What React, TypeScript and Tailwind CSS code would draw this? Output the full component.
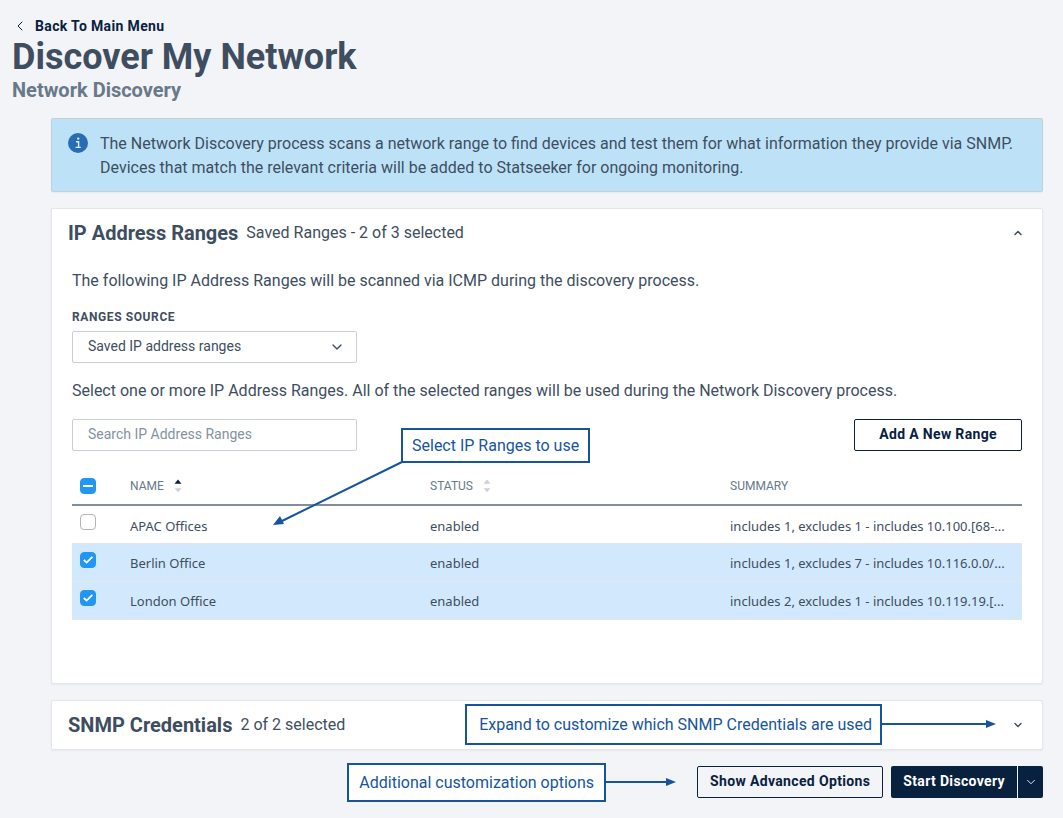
import { useState } from 'react'
import { ChevronDown, ChevronLeft, ChevronUp } from 'lucide-react'

interface Range { name: string; status: string; summary: string }

const ranges: Range[] = [
  { name: 'APAC Offices', status: 'enabled', summary: 'includes 1, excludes 1 - includes 10.100.[68-...' },
  { name: 'Berlin Office', status: 'enabled', summary: 'includes 1, excludes 7 - includes 10.116.0.0/...' },
  { name: 'London Office', status: 'enabled', summary: 'includes 2, excludes 1 - includes 10.119.19.[...' },
]

function Checkbox({ label, checked, mixed = false, onChange }: { label: string; checked: boolean; mixed?: boolean; onChange: () => void }) {
  return (
    <span className="relative block w-4 h-4">
      <input type="checkbox" aria-label={label} checked={checked} onChange={onChange}
        ref={el => { if (el) el.indeterminate = mixed }}
        className="block w-4 h-4 appearance-none rounded border border-[#b4b4b4] bg-white checked:border-[#2196f3] checked:bg-[#2196f3] indeterminate:border-[#2196f3] indeterminate:bg-[#2196f3]"
      />
      <svg viewBox="0 0 16 16" className="absolute inset-0 w-4 h-4 pointer-events-none" fill="none" stroke="white" strokeWidth="2">
        {mixed ? <path d="M3 8h10" /> : checked && <path d="M3.8 8 6.6 10.6 12.4 4.8" strokeWidth="1.8" />}
      </svg>
    </span>
  )
}

function SortIcon({ active = false }: { active?: boolean }) {
  return (
    <svg viewBox="0 0 8 14" className="w-2 h-3.5">
      <path d="M4 0.5 7.5 4.8H0.5Z" fill={active ? '#08213f' : '#ccd1d9'} />
      <path d="M4 13.2 7.5 9.2H0.5Z" fill="#ccd1d9" />
    </svg>
  )
}

function Arrow() {
  return (
    <span className="flex items-center">
      <span className="flex-1 h-0.5 bg-[#16559d]" />
      <svg viewBox="0 0 10 8" className="w-2.5 h-2"><path d="M0 0 10 4 0 8Z" fill="#16559d" /></svg>
    </span>
  )
}

export default function App() {
  const [selected, setSelected] = useState<string[]>(['Berlin Office', 'London Office'])
  const [source, setSource] = useState('saved')
  const [search, setSearch] = useState('')

  const allSelected = selected.length === ranges.length

  function toggle(name: string) {
    setSelected(selected.includes(name) ? selected.filter(n => n !== name) : [...selected, name])
  }

  return (
    <div className="min-h-screen bg-[#f3f4f8] pt-4 pb-5 font-['Roboto',sans-serif] text-base text-[#3e4e60]">
      <header className="px-3">
        <a href="#" className="flex items-center gap-[7px] h-5 text-sm font-bold tracking-wide text-[#08213f]">
          <ChevronLeft className="w-4 h-4" strokeWidth={1.5} /> Back To Main Menu
        </a>
        <h1 className="text-4xl leading-[42px] font-bold">Discover My Network</h1>
        <h2 className="text-xl leading-6 font-bold text-[#68798a]">Network Discovery</h2>
      </header>

      <main className="mt-4 ml-[51px] mr-5 flex flex-col gap-4">
        <div className="flex gap-3 px-4 pt-[13px] pb-[11px] border border-[#c5d0da] rounded-xs bg-[#bde2f8] shadow-xs">
          <svg viewBox="0 0 20 20" className="w-5 h-5 mt-px shrink-0">
            <circle cx="10" cy="10" r="10" fill="#2a6cb4" />
            <circle cx="10.2" cy="5.6" r="1.2" fill="#d9edfb" />
            <path d="M8 8.7h2.6v5.6M7.6 14.4h5.2" stroke="#d9edfb" strokeWidth="1.4" fill="none" />
          </svg>
          <p>
            The Network Discovery process scans a network range to find devices and test them for what information they provide via SNMP.
            Devices that match the relevant criteria will be added to Statseeker for ongoing monitoring.
          </p>
        </div>

        <section className="border border-[#e4e6ea] rounded-xs bg-white shadow-xs">
          <div className="flex items-center gap-2 h-12 px-4">
            <h3 className="text-xl font-bold">IP Address Ranges</h3>
            <span>Saved Ranges - {selected.length} of {ranges.length} selected</span>
            <button aria-label="Collapse IP Address Ranges" className="ml-auto mr-0.5">
              <ChevronUp className="w-3 h-3" strokeWidth={3} />
            </button>
          </div>

          <div className="px-5 pt-3 pb-[63px]">
            <p>The following IP Address Ranges will be scanned via ICMP during the discovery process.</p>
            <label htmlFor="source" className="block mt-4 mb-1.5 text-xs font-bold tracking-wider">RANGES SOURCE</label>
            <div className="relative w-[285px]">
              <select id="source" value={source} onChange={e => setSource(e.target.value)}
                className="block w-full h-8 px-[15px] pb-0.5 appearance-none border border-[#c9ced8] rounded-xs bg-white text-sm">
                <option value="saved">Saved IP address ranges</option>
              </select>
              <ChevronDown className="absolute right-3 top-2 w-4 h-4 pointer-events-none" strokeWidth={2} />
            </div>
            <p className="mt-4">Select one or more IP Address Ranges. All of the selected ranges will be used during the Network Discovery process.</p>

            <div className="relative flex justify-between mt-4">
              <input type="search" aria-label="Search IP Address Ranges" placeholder="Search IP Address Ranges"
                value={search} onChange={e => setSearch(e.target.value)}
                className="w-[285px] h-8 px-[15px] pb-0.5 border border-[#c9ced8] rounded-xs text-sm placeholder:text-[#8592a1]"
              />
              <button className="h-8 px-6 pb-0.5 border border-[#08213f] rounded-xs text-sm font-bold tracking-wide text-[#08213f]">Add A New Range</button>
              <div className="absolute left-[329px] top-[9px] px-[9px] py-1 border-2 border-[#16559d] bg-white whitespace-nowrap leading-[23px] text-[#16559d]">
                Select IP Ranges to use
              </div>
              <svg viewBox="0 0 130 66" className="absolute left-[201px] top-[42px] w-[130px] h-[66px] pointer-events-none">
                <path d="M129 1 9 60" stroke="#16559d" strokeWidth="2" />
                <path d="M0 64 7 55 11 63Z" fill="#16559d" />
              </svg>
            </div>

            <table className="w-full mt-4 table-fixed text-left">
              <thead>
                <tr className="h-[38px] border-b-2 border-[#7e8f9d] text-xs text-[#68798a]">
                  <th className="w-[50px] px-2">
                    <Checkbox label="Select all ranges" checked={allSelected} mixed={selected.length > 0 && !allSelected}
                      onChange={() => setSelected(allSelected ? [] : ranges.map(r => r.name))} />
                  </th>
                  <th className="px-2 font-normal"><span className="flex items-center gap-2.5">NAME <SortIcon active /></span></th>
                  <th className="px-2 font-normal"><span className="flex items-center gap-2.5">STATUS <SortIcon /></span></th>
                  <th className="px-2 font-normal">SUMMARY</th>
                </tr>
              </thead>
              <tbody className="font-['Noto_Sans',sans-serif] text-[13px]">
                {ranges.map(r => (
                  <tr key={r.name} className={`h-[38px] border-b border-[#e4e6ea] ${selected.includes(r.name) ? 'bg-[#d2e9fd]' : 'bg-white'}`}>
                    <td className="px-2 pb-1"><Checkbox label={r.name} checked={selected.includes(r.name)} onChange={() => toggle(r.name)} /></td>
                    <td className="px-2 pt-1">{r.name}</td>
                    <td className="px-2 pt-1">{r.status}</td>
                    <td className="px-2 pt-1 truncate">{r.summary}</td>
                  </tr>
                ))}
              </tbody>
            </table>
          </div>
        </section>

        <section className="relative flex items-center gap-2 h-[50px] px-4 border border-[#e4e6ea] rounded-xs bg-white shadow-xs">
          <h3 className="text-xl font-bold">SNMP Credentials</h3>
          <span>2 of 2 selected</span>
          <button aria-label="Expand SNMP Credentials" className="ml-auto mr-0.5">
            <ChevronDown className="w-3 h-3" strokeWidth={3} />
          </button>
          <div className="absolute right-[46px] top-[3px] flex text-[#16559d]">
            <span className="pl-3 pr-2 py-1.5 border-2 border-[#16559d] bg-white whitespace-nowrap leading-[25px]">
              Expand to customize which SNMP Credentials are used
            </span>
            <span className="grid w-[114px]"><Arrow /></span>
          </div>
        </section>

        <footer className="flex items-center justify-end gap-2 -mt-[3px]">
          <div className="flex mr-[13px] text-[#16559d]">
            <span className="px-2.5 py-1.5 border-2 border-[#16559d] bg-white whitespace-nowrap leading-[23px]">Additional customization options</span>
            <span className="grid w-[70px]"><Arrow /></span>
          </div>
          <button className="h-8 px-3 pb-0.5 border border-[#08213f] rounded-xs text-sm font-bold tracking-wide text-[#08213f]">Show Advanced Options</button>
          <div className="flex gap-px">
            <button className="h-8 px-3 pb-0.5 rounded-l-xs bg-[#08213f] text-sm font-bold tracking-wide text-white">Start Discovery</button>
            <button aria-label="More start options" className="flex items-center justify-center w-[25px] h-8 rounded-r-xs bg-[#08213f] text-white">
              <ChevronDown className="w-3.5 h-3.5" strokeWidth={1.5} />
            </button>
          </div>
        </footer>
      </main>
    </div>
  )
}
